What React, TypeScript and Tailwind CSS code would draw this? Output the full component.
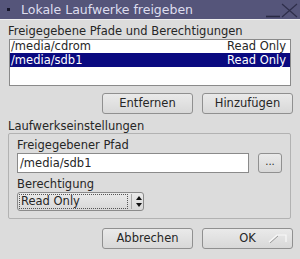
import React from "react";

const Btn = ({ children, className = "" }: { children: React.ReactNode; className?: string }) => (
  <div
    className={
      "relative flex items-center justify-center h-[21px] rounded-[3px] border border-[#909090] bg-gradient-to-b from-[#eaeaea] to-[#d8d8d8] text-[11.5px] text-[#262626] " +
      className
    }
  >
    {children}
  </div>
);

export default function App() {
  return (
    <div
      className="w-[300px] h-[259px] overflow-hidden bg-[#dcdcdc] text-[#262626] flex flex-col"
      style={{ fontFamily: '"DejaVu Sans", sans-serif' }}
    >
      {/* Title bar */}
      <div className="h-[19px] bg-[#55557a] flex items-center relative shrink-0">
        <div className="ml-[7px] w-[3px] h-[3px] bg-[#15152a]" />
        <div className="ml-[11px] text-[12.5px] leading-[19px] text-[#dedeee]">Lokale Laufwerke freigeben</div>
        <svg className="absolute left-[264px] top-[2px]" width="36" height="17" viewBox="0 0 36 17">
          <line x1="2" y1="14.5" x2="16" y2="14.5" stroke="#2a2a44" strokeWidth="1.6" />
          <line x1="18" y1="2" x2="33" y2="15" stroke="#2e2e4a" strokeWidth="1.2" />
          <line x1="33" y1="2" x2="18" y2="15" stroke="#2e2e4a" strokeWidth="1.2" />
        </svg>
      </div>
      <div className="h-[1px] bg-[#efefef] shrink-0" />

      <div className="px-[8px] flex flex-col">
        <div className="mt-[5px] text-[11.5px] leading-[13px]">Freigegebene Pfade und Berechtigungen</div>
        <div className="mt-[1px] ml-[1px] w-[282px] h-[47px] border border-[#8a8a8a] bg-white text-[11.5px]">
          <div className="h-[13px] flex justify-between items-center px-[1px] leading-[13px]">
            <span>/media/cdrom</span>
            <span className="mr-[3px]">Read Only</span>
          </div>
          <div className="h-[14px] flex justify-between items-center px-[1px] leading-[14px] bg-[#0a0a80] text-white">
            <span>/media/sdb1</span>
            <span className="mr-[3px]">Read Only</span>
          </div>
        </div>

        <div className="mt-[7px] flex justify-end gap-[9px] mr-[-1px]">
          <Btn className="w-[91px]">Entfernen</Btn>
          <Btn className="w-[91px]">Hinzufügen</Btn>
        </div>

        <div className="mt-[6px] text-[11.5px] leading-[13px]">Laufwerkseinstellungen</div>
        <div className="w-[283px] h-[86px] border border-[#b2b2b2] rounded-[2px] px-[8px] flex flex-col">
          <div className="mt-[5px] text-[11.5px] leading-[13px]">Freigegebener Pfad</div>
          <div className="mt-[1px] flex gap-[9px]">
            <div className="w-[233px] h-[20px] border border-[#8a8a8a] bg-white text-[11.5px] leading-[18px] px-[2px]">
              /media/sdb1
            </div>
            <div className="w-[24px] h-[20px] rounded-[3px] border border-[#909090] bg-gradient-to-b from-[#eaeaea] to-[#d8d8d8] text-[10px] leading-[16px] text-center">
              ...
            </div>
          </div>
          <div className="mt-[5px] text-[11.5px] leading-[13px]">Berechtigung</div>
          <div className="mt-[1px] w-[127px] h-[19px] rounded-[3px] border border-[#8a8a8a] bg-gradient-to-b from-[#eaeaea] to-[#d8d8d8] flex items-center">
            <div className="ml-[1px] w-[109px] h-[15px] border border-dotted border-[#555] text-[11.5px] leading-[13px] px-[1px]">
              Read Only
            </div>
            <div className="ml-[3px] w-[1px] h-[15px] bg-[#a8a8a8]" />
            <svg className="ml-[4px]" width="6" height="11" viewBox="0 0 6 11">
              <polygon points="3,0 6,4 0,4" fill="#111" />
              <polygon points="0,7 6,7 3,11" fill="#111" />
            </svg>
          </div>
        </div>

        <div className="mt-[9px] flex justify-end gap-[9px] mr-[-1px]">
          <Btn className="w-[91px]">Abbrechen</Btn>
          <Btn className="w-[91px]">
            OK
            <svg className="absolute right-[4px] top-[3px]" width="20" height="11" viewBox="0 0 20 11">
              <polyline points="1,10 9,3 18,3 18,10" fill="none" stroke="#f8f8f8" strokeWidth="1.2" />
              <polyline points="2,11 10,4" fill="none" stroke="#9a9a9a" strokeWidth="1" />
            </svg>
          </Btn>
        </div>
      </div>
    </div>
  );
}
